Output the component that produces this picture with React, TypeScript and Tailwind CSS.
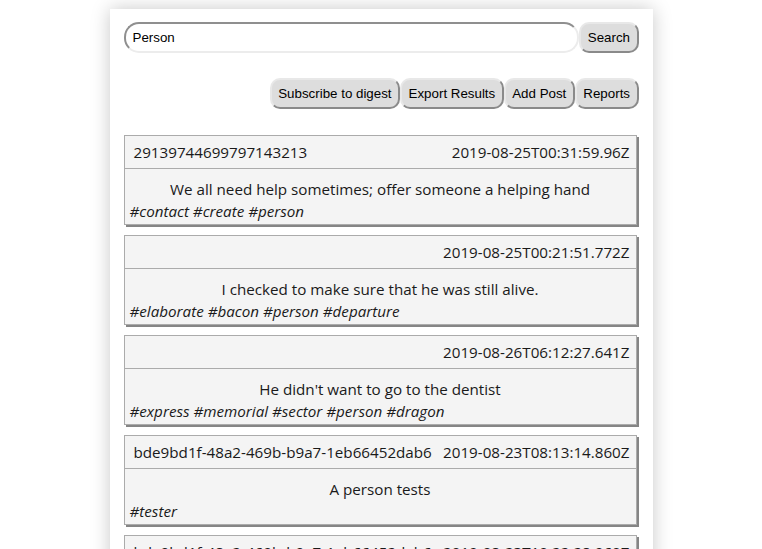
import React from 'react';

type Post = {
  id: string;
  date: string;
  text: string;
  tags: string[];
};

const posts: Post[] = [
  {
    id: '29139744699797143213',
    date: '2019-08-25T00:31:59.96Z',
    text: 'We all need help sometimes; offer someone a helping hand',
    tags: ['contact', 'create', 'person'],
  },
  {
    id: '',
    date: '2019-08-25T00:21:51.772Z',
    text: 'I checked to make sure that he was still alive.',
    tags: ['elaborate', 'bacon', 'person', 'departure'],
  },
  {
    id: '',
    date: '2019-08-26T06:12:27.641Z',
    text: "He didn't want to go to the dentist",
    tags: ['express', 'memorial', 'sector', 'person', 'dragon'],
  },
  {
    id: 'bde9bd1f-48a2-469b-b9a7-1eb66452dab6',
    date: '2019-08-23T08:13:14.860Z',
    text: 'A person tests',
    tags: ['tester'],
  },
  {
    id: 'bde9bd1f-48a2-469b-b9a7-1eb66452dab6',
    date: '2019-08-23T10:22:28.960Z',
    text: 'A person tests again',
    tags: ['tester'],
  },
];

const btn =
  'h-[31px] px-[6.5px] rounded-[10px] bg-[#dddddd] text-[13.33px] text-black border-2 border-t-[#e8e8e8] border-l-[#e8e8e8] border-b-[#8a8a8a] border-r-[#8a8a8a] whitespace-nowrap';

export default function App() {
  return (
    <div className="min-h-screen bg-white font-['Liberation_Sans',Arial,sans-serif]">
      <div className="mx-auto mt-[9px] w-[543px] bg-white shadow-[0_0_18px_rgba(0,0,0,0.22)] px-[14px] pt-[13px] pb-4">
        <div className="flex items-center">
          <input
            defaultValue="Person"
            className="flex-1 h-[31px] rounded-[15px] px-[7px] text-[13.33px] text-black bg-white border-2 border-t-[#8f8f8f] border-l-[#8f8f8f] border-b-[#ececec] border-r-[#ececec] outline-none"
          />
          <button className={btn}>Search</button>
        </div>

        <div className="flex justify-end mt-[25px]">
          <button className={btn}>Subscribe to digest</button>
          <button className={btn}>Export Results</button>
          <button className={btn}>Add Post</button>
          <button className={btn}>Reports</button>
        </div>

        <div className="mt-[26px] flex flex-col gap-[10px] font-['Open_Sans',sans-serif] text-[15.2px] text-[#1a1a1a]">
          {posts.map((post, i) => (
            <div
              key={i}
              className="bg-[#f4f4f4] border border-[#ababab] shadow-[2px_2px_0_#858585] mr-[2px]"
            >
              <div className="flex justify-between gap-1 pl-[9px] pr-[6px] h-[33px] items-center border-b border-[#ababab] whitespace-nowrap">
                <span>{post.id}</span>
                <span>{post.date}</span>
              </div>
              <div className="px-[5px] pt-[9px] pb-[2px]">
                <div className="text-center leading-[22px]">{post.text}</div>
                <div className="italic leading-[22px]">
                  {post.tags.map((t) => `#${t}`).join(' ')}
                </div>
              </div>
            </div>
          ))}
        </div>
      </div>
    </div>
  );
}
